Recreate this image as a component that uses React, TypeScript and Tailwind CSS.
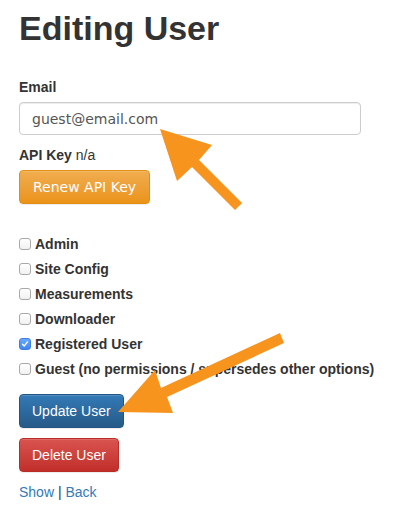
import React from 'react'

const permissions = [
  { label: 'Admin', checked: false },
  { label: 'Site Config', checked: false },
  { label: 'Measurements', checked: false },
  { label: 'Downloader', checked: false },
  { label: 'Registered User', checked: true },
  { label: 'Guest (no permissions / supersedes other options)', checked: false },
]

function Checkbox({ checked }: { checked: boolean }) {
  if (checked) {
    return (
      <span className="mr-[4px] flex h-[12px] w-[12px] shrink-0 items-center justify-center rounded-[3px] border border-[#3f7fe0] bg-linear-to-b from-[#6aa8fb] to-[#3d86f2]">
        <svg width="8" height="8" viewBox="0 0 8 8" fill="none">
          <path d="M1.5 4.2 L3.2 6 L6.5 1.8" stroke="white" strokeWidth="1.3" strokeLinecap="round" strokeLinejoin="round" />
        </svg>
      </span>
    )
  }
  return (
    <span className="mr-[4px] h-[12px] w-[12px] shrink-0 rounded-[3px] border border-[#a9a9a9] bg-linear-to-b from-white to-[#f1f1f1]" />
  )
}

export default function App() {
  return (
    <div className="relative h-[519px] w-[402px] overflow-hidden bg-white px-[19px] font-['Liberation_Sans',Arial,sans-serif] text-[14px] leading-[20px] text-[#333]">
      <h1 className="pt-[8px] text-[34px] font-bold leading-[40px] text-[#333]">
        Editing User
      </h1>

      <label className="mt-[29px] block font-bold">Email</label>
      <div className="mt-[5px] flex h-[33px] w-[342px] items-center rounded-[4px] border border-[#ccc] px-[12px] font-['DejaVu_Sans',sans-serif] text-[#555] shadow-[inset_0_1px_1px_rgba(0,0,0,0.075)]">
        guest@email.com
      </div>

      <p className="mt-[10px]">
        <span className="font-bold">API Key</span> n/a
      </p>
      <button className="mt-[5px] flex h-[34px] items-center rounded-[4px] border border-[#e38d13] bg-linear-to-b from-[#f0ad4e] to-[#eb9316] px-[13px] font-['DejaVu_Sans',sans-serif] text-white shadow-[inset_0_1px_0_rgba(255,255,255,0.15),0_1px_1px_rgba(0,0,0,0.075)]">
        Renew API Key
      </button>

      <div className="mt-[30px] flex flex-col gap-[5px]">
        {permissions.map((p) => (
          <div key={p.label} className="flex h-[20px] items-center">
            <Checkbox checked={p.checked} />
            <span className="font-bold">{p.label}</span>
          </div>
        ))}
      </div>

      <button className="mt-[15px] flex h-[34px] items-center rounded-[4px] border border-[#245580] bg-linear-to-b from-[#337ab7] to-[#265a88] px-[12px] text-white shadow-[inset_0_1px_0_rgba(255,255,255,0.15),0_1px_1px_rgba(0,0,0,0.075)]">
        Update User
      </button>
      <button className="mt-[10px] flex h-[34px] items-center rounded-[4px] border border-[#b92c28] bg-linear-to-b from-[#d9534f] to-[#c12e2a] px-[12px] text-white shadow-[inset_0_1px_0_rgba(255,255,255,0.15),0_1px_1px_rgba(0,0,0,0.075)]">
        Delete User
      </button>

      <p className="mt-[10px]">
        <a className="text-[#337ab7]">Show</a> | <a className="text-[#337ab7]">Back</a>
      </p>

      {/* annotation arrows drawn over the form */}
      <svg className="pointer-events-none absolute left-0 top-0" width="402" height="519" viewBox="0 0 402 519">
        <polygon
          fill="#f7941e"
          points="160,129 212,145 199,160 242,203 235,210 192,167 177,181"
        />
        <polygon
          fill="#f7941e"
          points="118,412 155,370 161,388 280,333 284,343 167,397 173,413"
        />
      </svg>
    </div>
  )
}
